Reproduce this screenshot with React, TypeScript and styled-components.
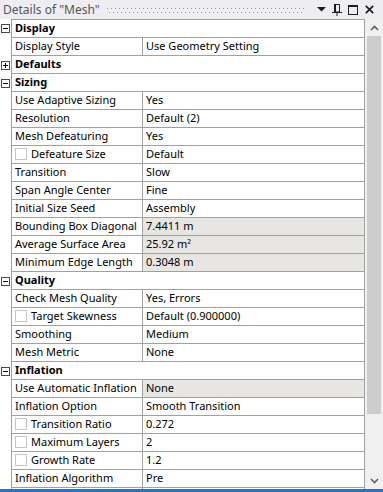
import React from 'react';
import styled, { createGlobalStyle } from 'styled-components';

interface PropRow {
  label: string;
  value?: string;
  group?: boolean;
  open?: boolean;
  check?: boolean;
  readOnly?: boolean;
}

const rows: PropRow[] = [
  { label: 'Display', group: true, open: true },
  { label: 'Display Style', value: 'Use Geometry Setting' },
  { label: 'Defaults', group: true, open: false },
  { label: 'Sizing', group: true, open: true },
  { label: 'Use Adaptive Sizing', value: 'Yes' },
  { label: 'Resolution', value: 'Default (2)' },
  { label: 'Mesh Defeaturing', value: 'Yes' },
  { label: 'Defeature Size', value: 'Default', check: true },
  { label: 'Transition', value: 'Slow' },
  { label: 'Span Angle Center', value: 'Fine' },
  { label: 'Initial Size Seed', value: 'Assembly' },
  { label: 'Bounding Box Diagonal', value: '7.4411 m', readOnly: true },
  { label: 'Average Surface Area', value: '25.92 m²', readOnly: true },
  { label: 'Minimum Edge Length', value: '0.3048 m', readOnly: true },
  { label: 'Quality', group: true, open: true },
  { label: 'Check Mesh Quality', value: 'Yes, Errors' },
  { label: 'Target Skewness', value: 'Default (0.900000)', check: true },
  { label: 'Smoothing', value: 'Medium' },
  { label: 'Mesh Metric', value: 'None' },
  { label: 'Inflation', group: true, open: true },
  { label: 'Use Automatic Inflation', value: 'None', readOnly: true },
  { label: 'Inflation Option', value: 'Smooth Transition' },
  { label: 'Transition Ratio', value: '0.272', check: true },
  { label: 'Maximum Layers', value: '2', check: true },
  { label: 'Growth Rate', value: '1.2', check: true },
  { label: 'Inflation Algorithm', value: 'Pre' },
  { label: '', value: '' },
];

const GRID = '#a0a0a0';

const App: React.FC = () => {
  return (
    <Panel>
      <Global />
      <TitleBar>
        <TitleText>Details of "Mesh"</TitleText>
        <Grip />
        <TitleButton>
          <svg width="9" height="5" viewBox="0 0 9 5">
            <path d="M0 0 H9 L4.5 4.5 Z" fill="#1e1e1e" />
          </svg>
        </TitleButton>
        <TitleButton>
          <svg width="10" height="12" viewBox="0 0 10 12">
            <path d="M2.5 0.5 H7.5 V8 H2.5 Z" fill="none" stroke="#1e1e1e" />
            <rect x="2" y="0" width="2" height="8" fill="#1e1e1e" />
            <rect x="0" y="8" width="10" height="1" fill="#1e1e1e" />
            <rect x="4.5" y="9" width="1" height="3" fill="#1e1e1e" />
          </svg>
        </TitleButton>
        <TitleButton>
          <svg width="10" height="10" viewBox="0 0 10 10">
            <rect x="0.5" y="0.5" width="9" height="9" fill="none" stroke="#1e1e1e" />
            <rect x="0" y="0" width="10" height="2" fill="#1e1e1e" />
          </svg>
        </TitleButton>
        <TitleButton>
          <svg width="9" height="9" viewBox="0 0 9 9">
            <path d="M0.8 0.8 L8.2 8.2 M8.2 0.8 L0.8 8.2" stroke="#1e1e1e" strokeWidth="1.7" />
          </svg>
        </TitleButton>
      </TitleBar>
      <Main>
        <Sheet>
          {rows.map((r, i) => (
            <Row key={i}>
              <Gutter>
                {r.group && (
                  <svg width="9" height="9" viewBox="0 0 9 9">
                    <rect x="0.5" y="0.5" width="8" height="8" fill="#fff" stroke="#4a4a4a" />
                    <path d="M2 4.5 H7" stroke="#000" />
                    {!r.open && <path d="M4.5 2 V7" stroke="#000" />}
                  </svg>
                )}
              </Gutter>
              <Cells>
                {r.group ? (
                  <GroupCell>{r.label}</GroupCell>
                ) : (
                  <>
                    <LabelCell>
                      {r.check && <CheckBox />}
                      {r.label}
                    </LabelCell>
                    <ValueCell readOnly={!!r.readOnly}>{r.value}</ValueCell>
                  </>
                )}
              </Cells>
            </Row>
          ))}
        </Sheet>
        <ScrollBar>
          <ScrollArrow>
            <svg width="9" height="6" viewBox="0 0 9 6">
              <path d="M1 5 L4.5 1.5 L8 5" fill="none" stroke="#606060" strokeWidth="1.6" />
            </svg>
          </ScrollArrow>
          <Thumb />
          <ScrollTrack />
          <ScrollArrow>
            <svg width="9" height="6" viewBox="0 0 9 6">
              <path d="M1 1 L4.5 4.5 L8 1" fill="none" stroke="#606060" strokeWidth="1.6" />
            </svg>
          </ScrollArrow>
        </ScrollBar>
      </Main>
      <StatusStrip />
    </Panel>
  );
};

const Global = createGlobalStyle`
  html, body {
    margin: 0;
    padding: 0;
    background: #ffffff;
  }
  body {
    font-family: "Noto Sans", "DejaVu Sans", sans-serif;
  }
`;

const Panel = styled.div`
  width: 383px;
  height: 492px;
  display: flex;
  flex-direction: column;
  overflow: hidden;
  background: #ffffff;
  font-family: "Noto Sans", "DejaVu Sans", sans-serif;
`;

const TitleBar = styled.div`
  height: 19px;
  flex: none;
  display: flex;
  align-items: center;
  background: #eeeef2;
  padding: 0 6px 0 3px;
`;

const TitleText = styled.span`
  font-size: 12px;
  color: #555555;
  white-space: nowrap;
  line-height: 18px;
`;

const Grip = styled.div`
  flex: 1;
  height: 5px;
  margin: 1px 8px 0 7px;
  background:
    linear-gradient(to right, #9a9aa2 1px, transparent 1px) 0 0 / 4px 1px repeat-x,
    linear-gradient(to right, #9a9aa2 1px, transparent 1px) 2px 4px / 4px 1px repeat-x;
`;

const TitleButton = styled.div`
  width: 16px;
  height: 19px;
  display: flex;
  align-items: center;
  justify-content: center;
`;

const Main = styled.div`
  flex: 1;
  min-height: 0;
  display: flex;
`;

const Sheet = styled.div`
  width: 365px;
  flex: none;
  display: flex;
  flex-direction: column;
  overflow: hidden;
`;

const Cells = styled.div`
  width: 352px;
  height: 17px;
  display: flex;
  border: 1px solid ${GRID};
  border-top: none;
  font-size: 11px;
  line-height: 16px;
  color: #000000;
`;

const Row = styled.div`
  display: flex;
  flex: none;

  &:first-child ${Cells} {
    border-top: 1px solid ${GRID};
  }
`;

const Gutter = styled.div`
  width: 11px;
  flex: none;
  display: flex;
  align-items: center;
  padding-left: 1px;
  box-sizing: border-box;
`;

const GroupCell = styled.div`
  flex: 1;
  padding-left: 3px;
  font-weight: bold;
  white-space: nowrap;
`;

const LabelCell = styled.div`
  width: 127px;
  flex: none;
  padding-left: 3px;
  border-right: 1px solid ${GRID};
  display: flex;
  align-items: flex-start;
  white-space: nowrap;
  overflow: hidden;
`;

const ValueCell = styled.div<{ readOnly: boolean }>`
  flex: 1;
  padding-left: 3px;
  white-space: nowrap;
  background: ${(p) => (p.readOnly ? '#e8e6e3' : '#ffffff')};
`;

const CheckBox = styled.span`
  width: 12px;
  height: 12px;
  flex: none;
  box-sizing: border-box;
  border: 1px solid #c4c4c4;
  background: #ffffff;
  margin: 2px 4px 0 0;
`;

const ScrollBar = styled.div`
  width: 18px;
  flex: none;
  display: flex;
  flex-direction: column;
  background: #f0f0f0;
`;

const ScrollArrow = styled.div`
  height: 17px;
  flex: none;
  display: flex;
  align-items: center;
  justify-content: center;
`;

const Thumb = styled.div`
  height: 378px;
  flex: none;
  margin: 0 2px 0 2px;
  background: #cdcdcd;
`;

const ScrollTrack = styled.div`
  flex: 1;
`;

const StatusStrip = styled.div`
  height: 3px;
  flex: none;
  background: #1b78cc;
`;

export default App;
